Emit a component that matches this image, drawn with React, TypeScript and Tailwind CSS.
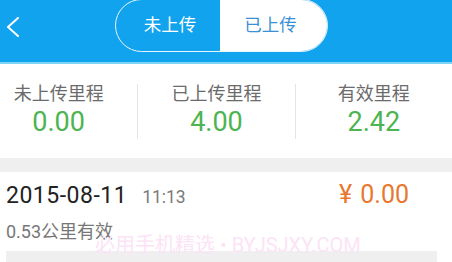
const stats = [
  { label: "未上传里程", value: "0.00" },
  { label: "已上传里程", value: "4.00" },
  { label: "有效里程", value: "2.42" },
];

export default function App() {
  return (
    <div className="relative w-[452px] h-[262px] overflow-hidden bg-white font-['Roboto','Noto_Sans_CJK_SC',sans-serif]">
      {/* header */}
      <div className="h-[64px] bg-[#12a3ee] border-b-2 border-[#7fd3f7] flex items-start relative">
        <div className="w-[115px] h-[52px] flex items-center pl-[6px] pt-[2px]">
          <svg width="14" height="20" viewBox="0 0 14 20" fill="none">
            <polyline points="12,1 2,10 12,19" stroke="white" strokeWidth="2" strokeLinecap="round" strokeLinejoin="round" />
          </svg>
        </div>
        <div className="-mt-[1px] w-[213px] h-[53px] rounded-full border-[1.5px] border-[#e8f6fd] flex overflow-hidden">
          <div className="w-[104px] flex items-center justify-center text-white text-[17.5px] pl-[4px]">
            未上传
          </div>
          <div className="flex-1 bg-white flex items-center justify-center text-[#3b8fd4] text-[17.5px] pr-[6px]">
            已上传
          </div>
        </div>
      </div>

      {/* stats */}
      <div className="h-[94px] flex -ml-[20px] pt-[20px]">
        {stats.map((s, i) => (
          <div
            key={s.label}
            className={`w-[161px] h-[55px] flex flex-col items-center ${i > 0 ? "border-l border-[#e4e4e4]" : ""}`}
          >
            <div className="text-[18px] leading-[20px] text-[#6b6b6b]">{s.label}</div>
            <div className="text-[27px] leading-[32px] text-[#4cb451] mt-[2px]">{s.value}</div>
          </div>
        ))}
      </div>

      <div className="h-[14px] bg-[#efefef]" />

      {/* record */}
      <div className="px-[6px] pt-[4px]">
        <div className="flex items-baseline h-[32px]">
          <span className="text-[23px] tracking-[0.5px] text-[#222]">2015-08-11</span>
          <span className="ml-[15px] text-[17.5px] text-[#7a7a7a]">11:13</span>
          <span className="ml-auto mr-[37px] text-[25px] text-[#e8772f]">
            ¥<span className="ml-[8px]">0.00</span>
          </span>
        </div>
        <div className="mt-[13px] text-[18px] leading-[22px] text-[#777]">0.53公里有效</div>
        <div className="mt-[8px] h-[14px] w-[431px] bg-[#efefef]" />
      </div>

      {/* watermark */}
      <div className="absolute left-[95px] top-[230px] text-[20px] text-[#fce3f6] pointer-events-none whitespace-nowrap">
        必用手机精选 • BYJSJXY.COM
      </div>
    </div>
  );
}
